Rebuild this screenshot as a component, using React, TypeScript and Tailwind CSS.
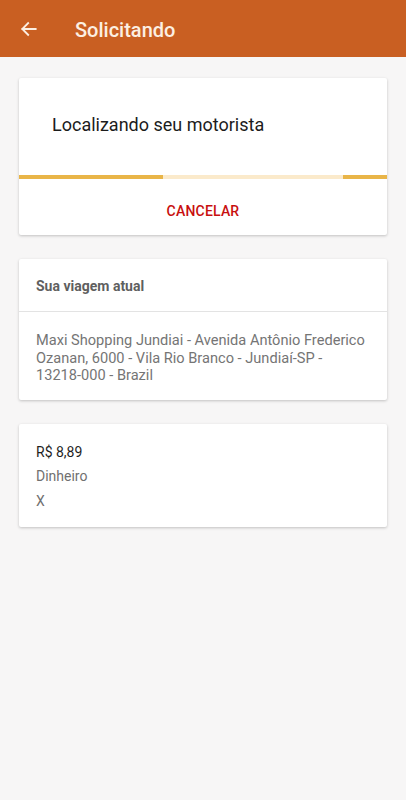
import React from "react";

const ArrowLeft = () => (
  <svg width="20" height="20" viewBox="0 0 24 24" fill="none">
    <path d="M20 12H4M11 5l-7 7 7 7" stroke="#fcefe2" strokeWidth="2.2" strokeLinecap="square" />
  </svg>
);

const App = () => {
  return (
    <div className="min-h-[800px] bg-[#f7f6f6] font-['Roboto',sans-serif]">
      {/* toolbar */}
      <div className="h-[57px] bg-[#c95f22] flex items-center">
        <div className="w-[58px] pl-[19px] pt-[1px] flex items-center">
          <ArrowLeft />
        </div>
        <p className="ml-[17px] pt-[2px] text-[20px] font-medium text-[#fcefe2]">Solicitando</p>
      </div>

      <div className="px-[19px] pt-[21px] flex flex-col gap-[24px]">
        {/* searching card */}
        <div className="bg-white rounded-[2px] shadow-[0_1px_3px_rgba(0,0,0,0.22)]">
          <div className="h-[97px] pl-[33px] pt-[36px]">
            <p className="text-[18px] text-[#1c1c1c] leading-[22px]">Localizando seu motorista</p>
          </div>
          <div className="h-[4px] flex">
            <div className="w-[144px] bg-[#e9b548]" />
            <div className="flex-1 bg-[#fbeacb]" />
            <div className="w-[44px] bg-[#e9b548]" />
          </div>
          <div className="h-[56px] pt-[8px] flex items-center justify-center">
            <span className="text-[14px] font-medium text-[#c80f0f] tracking-[0.2px]">CANCELAR</span>
          </div>
        </div>

        {/* current trip */}
        <div className="bg-white rounded-[2px] shadow-[0_1px_3px_rgba(0,0,0,0.22)]">
          <div className="h-[53px] px-[17px] pt-[2px] flex items-center border-b border-[#e3e3e3]">
            <p className="text-[14px] font-bold text-[#5f5f5f]">Sua viagem atual</p>
          </div>
          <div className="px-[17px] pt-[20px] pb-[15px]">
            <p className="text-[14.6px] leading-[17.5px] text-[#757575]">
              Maxi Shopping Jundiai - Avenida Antônio Frederico Ozanan, 6000 - Vila Rio Branco - Jundiaí-SP -{" "}
              <span className="whitespace-nowrap">13218-000</span> - Brazil
            </p>
          </div>
        </div>

        {/* payment */}
        <div className="bg-white rounded-[2px] shadow-[0_1px_3px_rgba(0,0,0,0.22)] px-[17px] pt-[19px] pb-[16px] flex flex-col gap-[5.5px]">
          <p className="text-[14px] leading-[19px] text-[#1f1f1f]">R$ 8,89</p>
          <p className="text-[14px] leading-[19px] text-[#707070]">Dinheiro</p>
          <p className="text-[14px] leading-[19px] text-[#707070]">X</p>
        </div>
      </div>
    </div>
  );
};

export default App;
